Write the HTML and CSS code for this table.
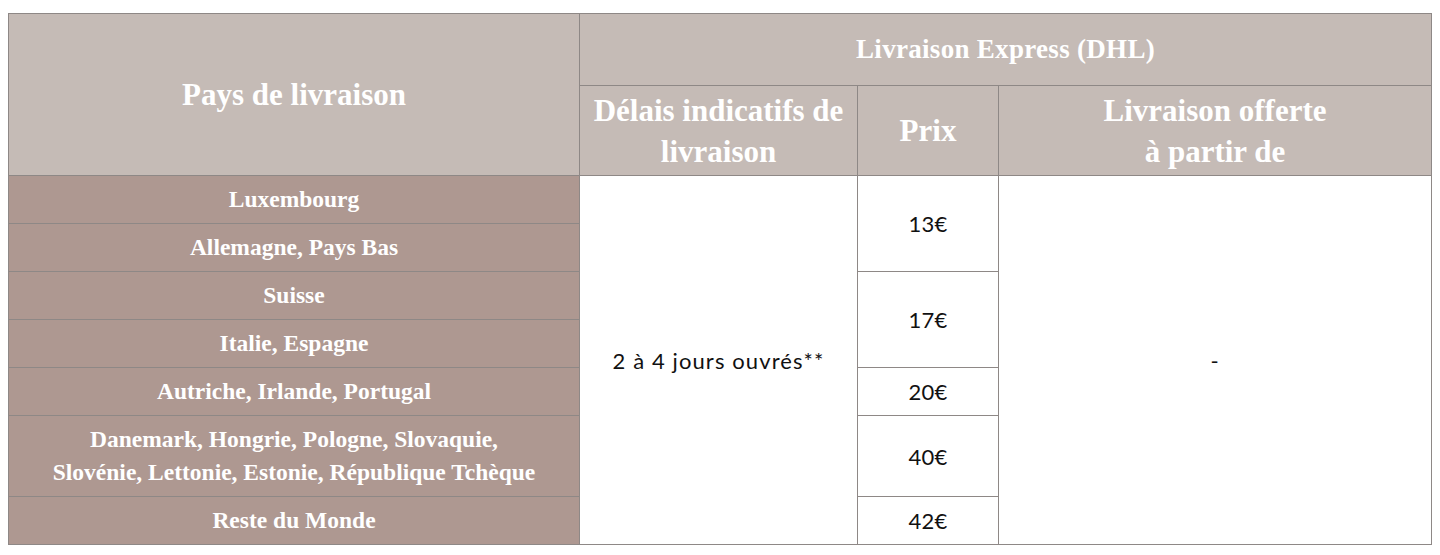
FILE: index.html
```html
<!DOCTYPE html>
<html lang="fr">
<head>
<meta charset="utf-8">
<title>Livraison Express</title>
<link rel="stylesheet" href="styles.css">
</head>
<body>
<div class="wrap">
<table class="ship">
  <colgroup>
    <col class="c-country">
    <col class="c-delay">
    <col class="c-price">
    <col class="c-free">
  </colgroup>
  <thead>
    <tr class="h1">
      <th rowspan="2" class="th-main">Pays de livraison</th>
      <th colspan="3" class="th-group">Livraison Express (DHL)</th>
    </tr>
    <tr class="h2">
      <th class="th-sub">Délais indicatifs de<br>livraison</th>
      <th class="th-sub">Prix</th>
      <th class="th-sub">Livraison offerte<br>à partir de</th>
    </tr>
  </thead>
  <tbody>
    <tr class="r">
      <td class="country">Luxembourg</td>
      <td class="val" rowspan="7">2 à 4 jours ouvrés**</td>
      <td class="val price" rowspan="2">13€</td>
      <td class="val" rowspan="7">-</td>
    </tr>
    <tr class="r"><td class="country">Allemagne, Pays Bas</td></tr>
    <tr class="r">
      <td class="country">Suisse</td>
      <td class="val price" rowspan="2">17€</td>
    </tr>
    <tr class="r"><td class="country">Italie, Espagne</td></tr>
    <tr class="r">
      <td class="country">Autriche, Irlande, Portugal</td>
      <td class="val price">20€</td>
    </tr>
    <tr class="r2">
      <td class="country">Danemark, Hongrie, Pologne, Slovaquie,<br>Slovénie, Lettonie, Estonie, République Tchèque</td>
      <td class="val price">40€</td>
    </tr>
    <tr class="r">
      <td class="country">Reste du Monde</td>
      <td class="val price">42€</td>
    </tr>
  </tbody>
</table>
</div>
</body>
</html>
```

FILE: styles.css
```css
html, body {
  margin: 0;
  padding: 0;
  background: #ffffff;
}
.wrap {
  padding: 13px 0 0 8px;
}
.ship {
  border-collapse: collapse;
  table-layout: fixed;
  width: 1423px;
}
.c-country { width: 571px; }
.c-delay { width: 278px; }
.c-price { width: 141px; }
.c-free { width: 433px; }

.ship th, .ship td {
  border: 1px solid #8e8886;
  padding: 0;
  text-align: center;
  vertical-align: middle;
}
.ship th {
  background: #c5bbb6;
  color: #ffffff;
  font-family: "Liberation Serif", "Times New Roman", serif;
  font-weight: bold;
}
.h1 { height: 72px; }
.h2 { height: 90px; }
.th-main {
  font-size: 31px;
  padding-bottom: 6px;
}
.th-group {
  font-size: 27px;
  letter-spacing: 0.3px;
}
.th-sub {
  font-size: 31px;
  line-height: 41px;
}
.r { height: 48px; }
.r2 { height: 81px; }
.country {
  background: #ae9891;
  color: #ffffff;
  font-family: "Liberation Serif", "Times New Roman", serif;
  font-weight: bold;
  font-size: 23.5px;
  line-height: 33px;
}
.val {
  background: #ffffff;
  color: #111111;
  font-family: "Lato", "Liberation Sans", sans-serif;
  font-size: 22px;
  letter-spacing: 1.1px;
}
.price {
  letter-spacing: 0.2px;
  padding-bottom: 4px;
}
```
